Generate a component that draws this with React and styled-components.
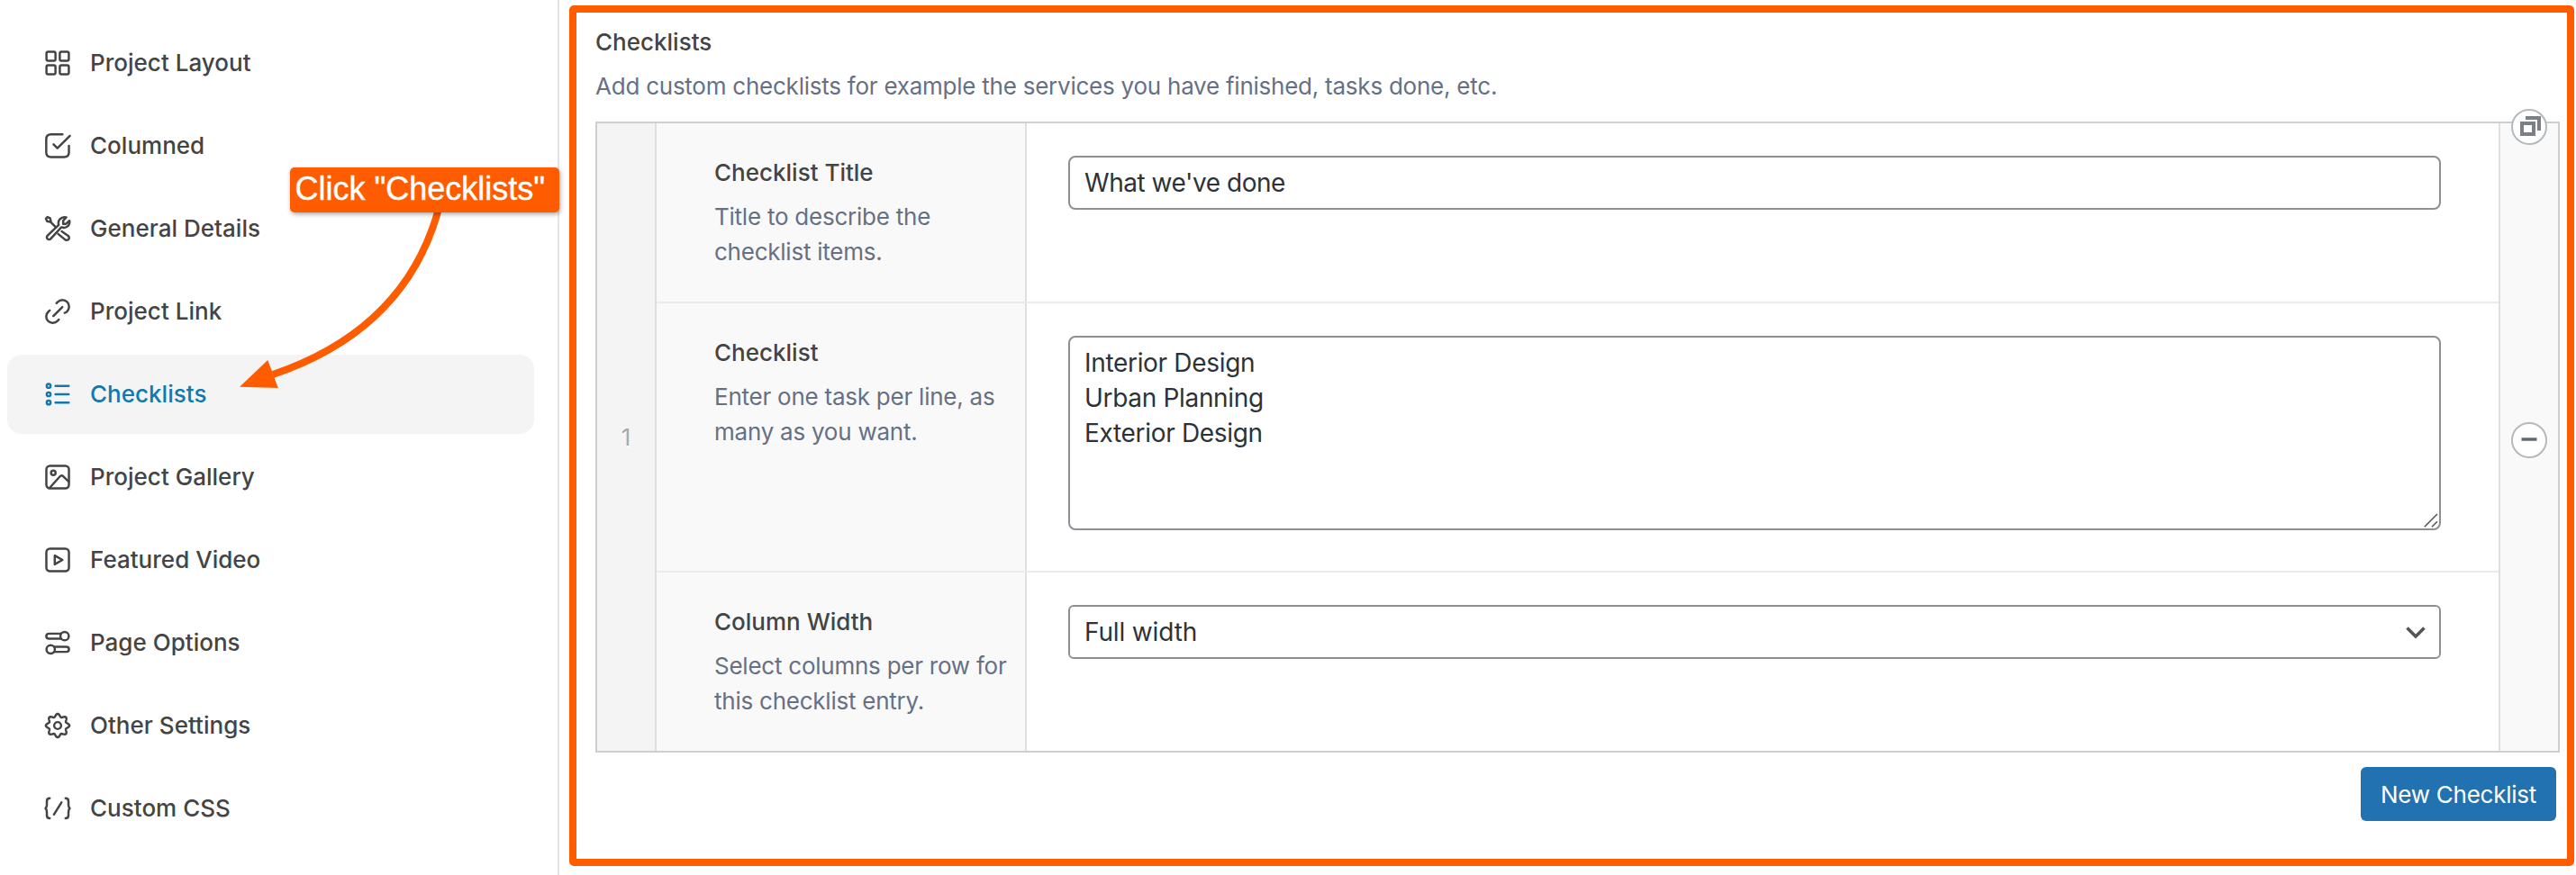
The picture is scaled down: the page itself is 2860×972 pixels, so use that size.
import React from "react";
import styled, { createGlobalStyle } from "styled-components";

const GlobalStyle = createGlobalStyle`
  *, *::before, *::after { box-sizing: border-box; }
  body {
    margin: 0;
    background: #fff;
    font-family: Inter, "Liberation Sans", sans-serif;
    font-size: 26px;
    color: #444;
  }
`;

const ACCENT = "#ff5c00";

const Page = styled.div`
  position: relative;
  display: flex;
  width: 2860px;
  height: 972px;
  overflow: hidden;
`;

const Sidebar = styled.nav`
  display: flex;
  flex-direction: column;
  gap: 4px;
  flex: none;
  width: 621px;
  padding: 26px 26px 0 8px;
  border-right: 2px solid #e4e4e7;
`;

const MenuItem = styled.a`
  display: flex;
  align-items: center;
  gap: 20px;
  height: 88px;
  padding-left: 40px;
  border-radius: 16px;
  font-weight: 500;
  letter-spacing: 0.02px;
  color: ${(p) => (p.$active ? "#1278ae" : "#444")};
  background: ${(p) => (p.$active ? "#f4f4f4" : "transparent")};
`;

const MenuLabel = styled.span`
  padding-bottom: 2px;
`;

const Icon = styled.svg.attrs({ viewBox: "0 0 24 24", fill: "none" })`
  flex: none;
  width: 32px;
  height: 32px;
  stroke: currentColor;
  stroke-width: 1.85;
  stroke-linecap: round;
  stroke-linejoin: round;
`;

const Panel = styled.main`
  flex: 1;
  display: flex;
  flex-direction: column;
  margin: 6px 2px 10px 11px;
  padding: 14px 8px 0 21px;
  border: 8px solid ${ACCENT};
  border-radius: 5px;
`;

const Title = styled.h3`
  margin: 0;
  font-size: 26px;
  font-weight: 500;
  line-height: 38px;
  color: #444;
`;

const Description = styled.p`
  margin: 10px 0 0;
  line-height: 39px;
  letter-spacing: -0.24px;
  color: #667085;
`;

const Repeater = styled.section`
  position: relative;
  display: flex;
  height: 701px;
  margin-top: 20px;
  border: 2px solid #ccced0;
`;

const RowHandle = styled.div`
  display: flex;
  align-items: center;
  justify-content: center;
  width: 66px;
  border-right: 2px solid #dfdfdf;
  background: #f4f4f4;
  color: #aaa;
  text-shadow: 0 2px 0 #fff;
`;

const Fields = styled.div`
  flex: 1;
  display: flex;
  flex-direction: column;
`;

const Field = styled.div`
  display: flex;
  height: ${(p) => p.$height}px;

  & + & { border-top: 2px solid #eaebed; }
`;

const FieldLabel = styled.div`
  width: 411px;
  padding: 36px 16px 0 64px;
  border-right: 2px solid #dfdfdf;
  background: #f9f9f9;
`;

const FieldInput = styled.div`
  flex: 1;
  padding: 36px 64px 0 46px;
`;

const TextInput = styled.input`
  display: block;
  width: 100%;
  height: 60px;
  padding: 0 16px;
  border: 2px solid #8c8f94;
  border-radius: 8px;
  outline: none;
  background: #fff;
  font: 28px Inter, "Liberation Sans", sans-serif;
  letter-spacing: -0.46px;
  color: #2c3338;
`;

const TextAreaWrap = styled.div`
  position: relative;
  height: 216px;
`;

const TextArea = styled.textarea`
  display: block;
  width: 100%;
  height: 100%;
  padding: 9px 16px;
  border: 2px solid #8c8f94;
  border-radius: 8px;
  outline: none;
  resize: none;
  font: 28px/39.2px Inter, "Liberation Sans", sans-serif;
  letter-spacing: -0.32px;
  color: #2c3338;
`;

const ResizeGrip = styled.svg`
  position: absolute;
  right: 3px;
  bottom: 3px;
  width: 16px;
  height: 16px;
  stroke: #555;
  stroke-width: 1.6;
`;

const SelectBox = styled.div`
  display: flex;
  align-items: center;
  justify-content: space-between;
  height: 60px;
  padding: 0 14px 0 16px;
  border: 2px solid #8c8f94;
  border-radius: 6px;
  font-size: 28px;
  letter-spacing: -0.15px;
  color: #2c3338;
`;

const Chevron = styled.svg`
  width: 24px;
  height: 16px;
  fill: none;
  stroke: #555;
  stroke-width: 3.6;
`;

const RowActions = styled.div`
  display: flex;
  align-items: center;
  justify-content: center;
  width: 66px;
  padding-top: 7px;
  border-left: 2px solid #dfdfdf;
  background: #f9f9f9;
`;

const RoundButton = styled.button`
  display: flex;
  align-items: center;
  justify-content: center;
  width: 40px;
  height: 40px;
  padding: 0;
  border: 2px solid #b4b9be;
  border-radius: 50%;
  background: #fff;
`;

const DuplicateButton = styled(RoundButton)`
  position: absolute;
  top: -16px;
  right: 12px;
`;

const Glyph = styled.svg`
  flex: none;
  width: 36px;
  height: 36px;
`;

const Footer = styled.div`
  display: flex;
  justify-content: flex-end;
  padding: 16px 4px 0 0;
`;

const PrimaryButton = styled.button`
  width: 217px;
  height: 60px;
  padding: 0;
  border: 0;
  border-radius: 6px;
  background: #2271b1;
  color: #fff;
  font: 26px Inter, "Liberation Sans", sans-serif;
  letter-spacing: -0.26px;
`;

const Callout = styled.div`
  position: absolute;
  left: 322px;
  top: 186px;
  width: 299px;
  height: 50px;
  padding-left: 5.5px;
  border-radius: 5px;
  background: ${ACCENT};
  box-shadow: 1px 2px 5px rgba(0, 0, 0, 0.35);
  color: #fff;
  font: 36px/47px "Liberation Sans", Arial, sans-serif;
  -webkit-text-stroke: 0.4px #fff;
  white-space: nowrap;
`;

const Arrow = styled.svg`
  position: absolute;
  left: 260px;
  top: 230px;
  width: 240px;
  height: 210px;
`;

const gearPath =
  Array.from({ length: 144 }, (_, i) => {
    const t = (i / 144) * Math.PI * 2;
    const r = 8.6 + 1.2 * Math.cos(8 * t);
    return `${i ? "L" : "M"}${(12 + r * Math.sin(t)).toFixed(2)} ${(12 - r * Math.cos(t)).toFixed(2)}`;
  }).join("") + "Z";

const menu = [
  {
    label: "Project Layout",
    icon: (
      <>
        <rect x="2.7" y="2.7" width="7.5" height="7.5" rx="1.3" />
        <rect x="13.8" y="2.7" width="7.5" height="7.5" rx="1.3" />
        <rect x="2.7" y="13.8" width="7.5" height="7.5" rx="1.3" />
        <rect x="13.8" y="13.8" width="7.5" height="7.5" rx="1.3" />
      </>
    ),
  },
  {
    label: "Columned",
    icon: (
      <>
        <path d="M16 2.5H6.5C3.6 2.5 2.5 3.6 2.5 6.5V17.5C2.5 20.3 3.6 21.4 6.5 21.4H17.3C20.2 21.4 21.4 20.3 21.4 17.5V12" />
        <path d="M8.6 10.7L11.8 14L22.2 3.7" />
      </>
    ),
  },
  {
    label: "General Details",
    icon: (
      <>
        <path d="M19.2 2.6L16.6 5.4V8H19L21.8 5.3C22.5 8.3 20.5 11.2 17.3 11.2C16.5 11.2 15.8 11 15.1 10.8L6.3 20.4C4.5 22.4 1.7 19.6 3.6 17.7L12.9 8.9C11.8 5.3 14.6 1.6 19.2 2.6Z" />
        <path d="M15.4 14.2L20.8 18C23.1 20.2 19.8 23 17.9 20.9L12.4 16.4" />
        <path d="M10.6 10.9L6 6.2M2.2 3.6L3.5 2.3L5.7 3.3L6.5 6.6L3.2 5.8Z" />
      </>
    ),
  },
  {
    label: "Project Link",
    icon: (
      <>
        <path d="M11 5.1L11.9 4.2C14.3 1.9 17.7 1.9 19.9 4.1C22.1 6.3 22.1 9.7 19.8 12.1C19.2 12.7 18.6 13 17.8 13.2" />
        <path d="M5.4 11.1L4.4 12C1.9 14.4 1.9 17.8 4.1 20C6.3 22.1 9.7 22.1 12 19.8L13 18.7" />
        <path d="M8.4 15.8L15.9 8.3" />
      </>
    ),
  },
  {
    label: "Checklists",
    active: true,
    icon: (
      <>
        <circle cx="4.5" cy="5" r="1.6" />
        <circle cx="4.5" cy="12" r="1.6" />
        <circle cx="4.5" cy="18.9" r="1.6" />
        <path d="M10.2 5H21.2M10.2 12H21.2M10.2 18.9H21.2" />
      </>
    ),
  },
  {
    label: "Project Gallery",
    icon: (
      <>
        <rect x="2.6" y="2.6" width="18.8" height="18.8" rx="3" />
        <circle cx="8.4" cy="8.4" r="1.9" />
        <path d="M5.3 21L13.9 11.4C14.8 10.4 15.7 10.4 16.6 11.3L21.3 15.8" />
      </>
    ),
  },
  {
    label: "Featured Video",
    icon: (
      <>
        <rect x="2.6" y="2.6" width="18.8" height="18.8" rx="3" />
        <path d="M9.6 8.3V15.7L16 12Z" />
      </>
    ),
  },
  {
    label: "Page Options",
    icon: (
      <>
        <circle cx="17.8" cy="6.5" r="3.5" />
        <path d="M14.8 4.4H4.8C1.8 4.4 1.8 8.6 4.8 8.6H14.8" />
        <circle cx="6.2" cy="17.5" r="3.5" />
        <path d="M9.2 15.4H19.2C22.2 15.4 22.2 19.6 19.2 19.6H9.2" />
      </>
    ),
  },
  {
    label: "Other Settings",
    icon: (
      <>
        <path d={gearPath} />
        <circle cx="12" cy="12" r="2.9" />
      </>
    ),
  },
  {
    label: "Custom CSS",
    icon: (
      <>
        <path d="M5.4 3.6C3.5 3.6 3 4.4 3 6V9C3 10.8 2.6 11.4 1.9 12C2.6 12.6 3 13.2 3 15V17.8C3 19.5 3.5 20.3 5.4 20.3" />
        <path d="M18.6 3.6C20.5 3.6 21 4.4 21 6V9C21 10.8 21.4 11.4 22.1 12C21.4 12.6 21 13.2 21 15V17.8C21 19.5 20.5 20.3 18.6 20.3" />
        <path d="M15.2 7L8.9 17.1" />
      </>
    ),
  },
];

export default function App() {
  return (
    <>
      <GlobalStyle />
      <Page>
        <Sidebar>
          {menu.map(({ label, icon, active }) => (
            <MenuItem key={label} $active={active}>
              <Icon>{icon}</Icon>
              <MenuLabel>{label}</MenuLabel>
            </MenuItem>
          ))}
        </Sidebar>

        <Panel>
          <Title>Checklists</Title>
          <Description>
            Add custom checklists for example the services you have finished, tasks done, etc.
          </Description>

          <Repeater>
            <RowHandle>1</RowHandle>
            <Fields>
              <Field $height={198}>
                <FieldLabel>
                  <Title>Checklist Title</Title>
                  <Description>Title to describe the checklist items.</Description>
                </FieldLabel>
                <FieldInput>
                  <TextInput defaultValue="What we've done" />
                </FieldInput>
              </Field>
              <Field $height={299}>
                <FieldLabel>
                  <Title>Checklist</Title>
                  <Description>Enter one task per line, as many as you want.</Description>
                </FieldLabel>
                <FieldInput>
                  <TextAreaWrap>
                    <TextArea
                      spellCheck={false}
                      defaultValue={"Interior Design\nUrban Planning\nExterior Design"}
                    />
                    <ResizeGrip viewBox="0 0 16 16">
                      <path d="M0.8 15.2L15 1M9 15.2L15 9.2" />
                    </ResizeGrip>
                  </TextAreaWrap>
                </FieldInput>
              </Field>
              <Field $height={200}>
                <FieldLabel>
                  <Title>Column Width</Title>
                  <Description>Select columns per row for this checklist entry.</Description>
                </FieldLabel>
                <FieldInput>
                  <SelectBox>
                    Full width
                    <Chevron viewBox="0 0 24 16">
                      <path d="M2.5 3.5L12 13L21.5 3.5" />
                    </Chevron>
                  </SelectBox>
                </FieldInput>
              </Field>
            </Fields>
            <RowActions>
              <RoundButton aria-label="Remove row">
                <Glyph viewBox="0 0 36 36">
                  <rect x="9.5" y="15.3" width="17" height="3.4" fill="#5f646d" />
                </Glyph>
              </RoundButton>
            </RowActions>
            <DuplicateButton aria-label="Duplicate row">
              <Glyph viewBox="0 0 36 36" fill="none" stroke="#7b7f86" strokeWidth="4">
                <path d="M14 8H29V22" />
                <rect x="10" y="14" width="13" height="12" />
              </Glyph>
            </DuplicateButton>
          </Repeater>

          <Footer>
            <PrimaryButton>New Checklist</PrimaryButton>
          </Footer>
        </Panel>

        <Arrow viewBox="260 230 240 210">
          <path
            d="M487 232C463 320 403 382 303 416"
            fill="none"
            stroke={ACCENT}
            strokeWidth="8"
          />
          <path d="M266 429.7L297.3 400L308.8 431Z" fill={ACCENT} />
        </Arrow>
        <Callout>Click "Checklists"</Callout>
      </Page>
    </>
  );
}
